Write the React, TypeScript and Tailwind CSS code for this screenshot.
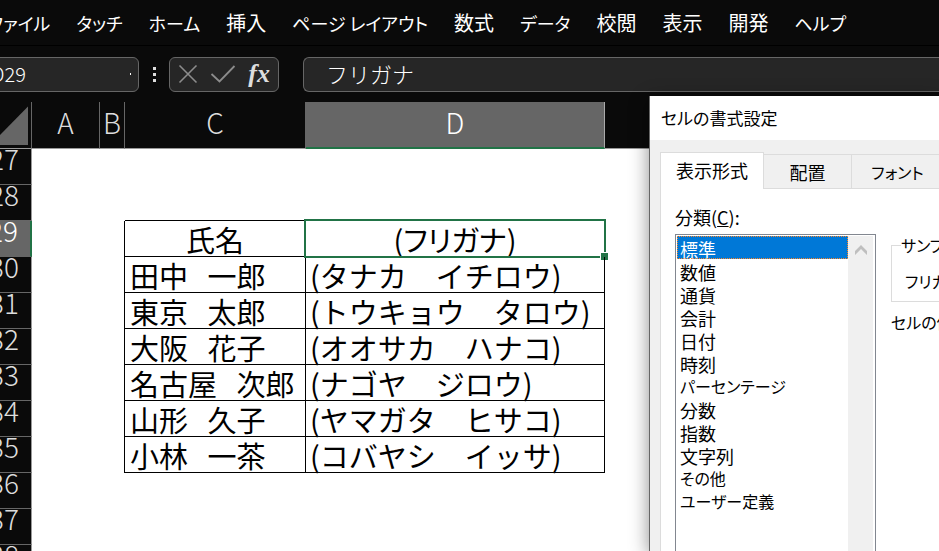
import { useState } from "react";
import type { ReactNode } from "react";
import clsx from "clsx";

const menuItems = [
  "ファイル",
  "タッチ",
  "ホーム",
  "挿入",
  "ページ レイアウト",
  "数式",
  "データ",
  "校閲",
  "表示",
  "開発",
  "ヘルプ",
];

const people: Record<number, [string, string]> = {
  30: ["田中   一郎", "(タナカ　イチロウ)"],
  31: ["東京   太郎", "(トウキョウ　タロウ)"],
  32: ["大阪   花子", "(オオサカ　ハナコ)"],
  33: ["名古屋   次郎", "(ナゴヤ　ジロウ)"],
  34: ["山形   久子", "(ヤマガタ　ヒサコ)"],
  35: ["小林   一茶", "(コバヤシ　イッサ)"],
};

const rowNumbers = [27, 28, 29, 30, 31, 32, 33, 34, 35, 36, 37, 38];

const categories = [
  "標準",
  "数値",
  "通貨",
  "会計",
  "日付",
  "時刻",
  "パーセンテージ",
  "分数",
  "指数",
  "文字列",
  "その他",
  "ユーザー定義",
];

const hasKana = (text: string) => /[\u3040-\u30ff]/.test(text);

function Ribbon() {
  return (
    <nav className="flex h-[46px] shrink-0 items-center gap-[26px] overflow-hidden whitespace-nowrap border-b border-black leading-6">
      {menuItems.map((item, i) => (
        <button
          key={item}
          type="button"
          className={clsx("shrink-0", hasKana(item) ? "text-[18px]" : "text-[20px]", i === 0 && "-ml-3")}
        >
          {item}
        </button>
      ))}
    </nav>
  );
}

function FormulaBar() {
  const [value, setValue] = useState("フリガナ");

  return (
    <div className="flex h-14 shrink-0 items-center overflow-hidden">
      <div className="relative -ml-3 w-[151px] shrink-0">
        <input
          aria-label="名前ボックス"
          defaultValue="D29"
          className="block h-[35px] w-full rounded-md border border-[#666] bg-[#262626] pb-0.5 pl-0.5 text-[20px] font-light text-white outline-none"
        />
        <span className="absolute right-2 top-4 h-[2px] w-px bg-white" />
      </div>

      <div className="flex w-[30px] shrink-0 flex-col items-center gap-[3px]">
        <span className="size-[3px] bg-[#ddd]" />
        <span className="size-[3px] bg-[#ddd]" />
        <span className="size-[3px] bg-[#ddd]" />
      </div>

      <div className="flex h-[35px] w-[110px] shrink-0 items-center justify-between rounded-md border border-[#666] bg-[#262626] px-2">
        <button type="button" aria-label="キャンセル">
          <svg width="20" height="20" viewBox="0 0 20 20" fill="none" stroke="#8c8c8c" strokeWidth="1.6">
            <path d="M1.5 1.5 18.5 18.5M18.5 1.5 1.5 18.5" />
          </svg>
        </button>
        <button type="button" aria-label="入力">
          <svg width="26" height="20" viewBox="0 0 26 20" fill="none" stroke="#8c8c8c" strokeWidth="1.8">
            <path d="M1.5 10 9.5 17.5 24.5 2" />
          </svg>
        </button>
        <button
          type="button"
          aria-label="関数の挿入"
          className="font-['Liberation_Serif',serif] text-[26px] leading-7 font-bold italic text-[#ddd]"
        >
          fx
        </button>
      </div>

      <input
        aria-label="数式バー"
        value={value}
        onChange={(e) => setValue(e.target.value)}
        className="ml-6 h-[35px] min-w-0 flex-1 rounded-l-md border border-r-0 border-[#666] bg-[#262626] pb-0.5 pl-[22px] text-[22px] font-light text-white outline-none [font-feature-settings:normal]"
      />
    </div>
  );
}

function ColumnHeader({ children, selected = false }: { children?: ReactNode; selected?: boolean }) {
  return (
    <th
      scope="col"
      className={clsx(
        "h-[47px] border-r p-0 pb-1.5 text-[28px] leading-8 font-light",
        selected
          ? "border-b-2 border-r-[#aaa] border-b-[#217346] bg-[#666] text-white"
          : "border-b border-r-[#666] border-b-[#999] bg-[#0a0a0a] text-[#ddd]",
      )}
    >
      {children}
    </th>
  );
}

function SheetRow({ row }: { row: number }) {
  const selected = row === 29;
  const person = people[row];
  const filled = selected || person !== undefined;
  const line = filled ? "border-b border-r border-black" : row === 28 ? "border-b border-b-black" : "";

  return (
    <tr>
      <th
        scope="row"
        className={clsx(
          "h-9 border-b border-b-[#666] p-0 align-top text-[28px] leading-[18px] font-light",
          selected
            ? "border-r-2 border-r-[#217346] bg-[#666] text-white"
            : "border-r border-r-[#999] bg-[#0a0a0a] text-[#ddd]",
        )}
      >
        <span className="flex justify-end pr-3">{row}</span>
      </th>
      <td className="p-0" />
      <td className={clsx("p-0", filled && "border-r border-black")} />
      <td className={clsx("h-9 p-0 text-[29px] leading-[34px] whitespace-pre", line, selected ? "text-center" : "pl-[5px]")}>
        {selected ? "氏名" : person?.[0]}
      </td>
      <td
        className={clsx(
          "relative h-9 p-0 text-[29px] leading-[34px] whitespace-pre",
          line,
          selected ? "text-center" : "pl-1 [font-feature-settings:normal]",
        )}
      >
        {selected ? "(フリガナ)" : person?.[1]}
        {selected && (
          <>
            <span className="pointer-events-none absolute -top-[2px] -right-[2px] -bottom-[2px] -left-[2px] border-2 border-[#217346]" />
            <span className="absolute -right-1 -bottom-1 size-[8px] border border-r-0 border-b-0 border-white bg-[#217346]" />
          </>
        )}
      </td>
      <td className="p-0" />
    </tr>
  );
}

function Sheet() {
  return (
    <div className="min-h-0 flex-1 overflow-hidden bg-white text-black">
      <table className="w-full table-fixed border-separate border-spacing-0">
        <colgroup>
          <col className="w-8" />
          <col className="w-[68px]" />
          <col className="w-[25px]" />
          <col className="w-[181px]" />
          <col className="w-[299px]" />
          <col />
        </colgroup>
        <thead>
          <tr>
            <th className="border-r border-b border-r-[#666] border-b-[#999] bg-[#0a0a0a] p-0">
              <button type="button" aria-label="すべて選択" className="block">
                <svg width="31" height="46" viewBox="0 0 31 46" fill="#666">
                  <path d="M28 4.5V43H0V33Z" />
                </svg>
              </button>
            </th>
            <ColumnHeader>A</ColumnHeader>
            <ColumnHeader>B</ColumnHeader>
            <ColumnHeader>C</ColumnHeader>
            <ColumnHeader selected>D</ColumnHeader>
            <ColumnHeader />
          </tr>
        </thead>
        <tbody>
          {rowNumbers.map((row) => (
            <SheetRow key={row} row={row} />
          ))}
        </tbody>
      </table>
    </div>
  );
}

function FormatCellsDialog() {
  const [category, setCategory] = useState("標準");

  return (
    <section
      role="dialog"
      aria-labelledby="dialog-title"
      className="absolute top-24 right-0 bottom-0 left-[649px] flex flex-col overflow-hidden border-l border-[#666] bg-[#f0f0f0] text-[18px] leading-6 whitespace-nowrap text-black shadow-[0_4px_18px_rgba(0,0,0,0.45)]"
    >
      <h2 id="dialog-title" className="h-11 shrink-0 bg-white pl-[11px] text-[17px] leading-[44px]">
        セルの書式設定
      </h2>

      <div className="flex min-h-0 flex-1 flex-col pt-3 pl-[10px]">
        <div role="tablist" className="flex shrink-0 items-end">
          <button type="button" role="tab" aria-selected className="h-[37px] w-[104px] shrink-0 border border-b-0 border-[#dcdcdc] bg-white pb-0.5">
            表示形式
          </button>
          <button type="button" role="tab" aria-selected={false} className="h-[35px] w-[88px] shrink-0 border-y border-r border-[#dcdcdc]">
            配置
          </button>
          <button type="button" role="tab" aria-selected={false} className="h-[35px] w-[92px] shrink-0 border-y border-r border-[#dcdcdc] text-[16px]">
            フォント
          </button>
        </div>

        <div role="tabpanel" className="flex min-h-0 flex-1 border-l border-[#dcdcdc] bg-white pt-4 pl-[14px]">
          <div className="flex w-[201px] shrink-0 flex-col">
            <label htmlFor="category" className="h-[29px] shrink-0">
              分類(<u>C</u>):
            </label>
            <div className="flex min-h-0 flex-1 border border-b-0 border-[#828790] p-px pb-0">
              <select
                id="category"
                size={14}
                value={category}
                onChange={(e) => setCategory(e.target.value)}
                className="h-full min-w-0 flex-1 appearance-none overflow-hidden bg-white outline-none"
              >
                {categories.map((name) => (
                  <option
                    key={name}
                    value={name}
                    className={clsx(
                      "h-[23px] min-h-0 p-0 pl-[3px] leading-[19px] text-black checked:bg-[linear-gradient(#0078d7,#0078d7)] checked:text-white checked:outline checked:-outline-offset-1 checked:outline-dotted checked:outline-[#ff8728] checked:[-webkit-text-fill-color:white]",
                      hasKana(name) ? "text-[16px]" : "text-[18px]",
                    )}
                  >
                    {name}
                  </option>
                ))}
              </select>
              <div className="mr-px w-[25px] shrink-0 bg-[#f0f0f0]">
                <button type="button" aria-label="上へスクロール" className="flex h-7 w-full items-center justify-center">
                  <svg width="12" height="10" viewBox="0 0 12 10" fill="#bfbfbf">
                    <path d="M6 0 12 6V10L6 4 0 10V6Z" />
                  </svg>
                </button>
              </div>
            </div>
          </div>

          <div className="ml-[15px] w-[300px] shrink-0 text-[16px]">
            <fieldset className="mt-7 h-[69px] border border-[#dcdcdc] pl-[13px]">
              <legend className="-ml-1">サンプル</legend>
              <p className="pt-3">フリガナ</p>
            </fieldset>
            <p className="pt-2">セルの値をそのまま表示します。</p>
          </div>
        </div>
      </div>
    </section>
  );
}

export default function App() {
  return (
    <main className="relative flex h-screen flex-col overflow-hidden bg-[#0a0a0a] font-['Noto_Sans_CJK_JP',sans-serif] text-white [font-feature-settings:'palt']">
      <Ribbon />
      <FormulaBar />
      <Sheet />
      <FormatCellsDialog />
    </main>
  );
}
